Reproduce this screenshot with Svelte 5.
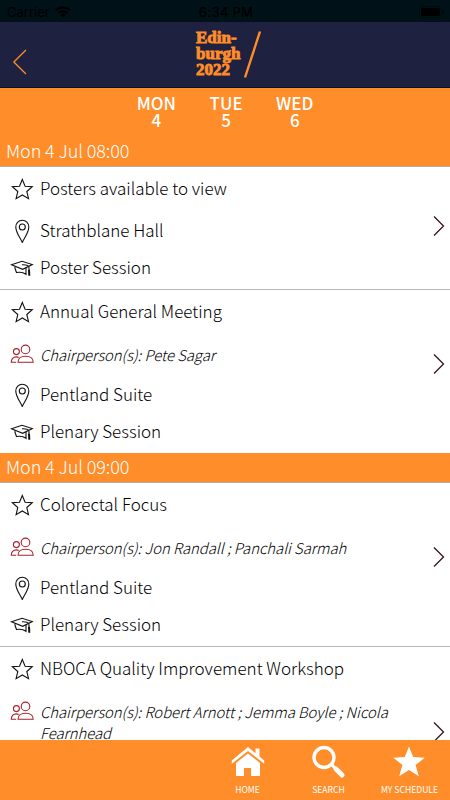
<script lang="ts">
	type Session = {
		title: string;
		chairs?: string;
		location: string;
		type: string;
	};

	type Slot = {
		time: string;
		sessions: Session[];
	};

	const days = [
		{ name: 'MON', date: 4 },
		{ name: 'TUE', date: 5 },
		{ name: 'WED', date: 6 }
	];

	const slots: Slot[] = [
		{
			time: 'Mon 4 Jul 08:00',
			sessions: [
				{ title: 'Posters available to view', location: 'Strathblane Hall', type: 'Poster Session' },
				{
					title: 'Annual General Meeting',
					chairs: 'Pete Sagar',
					location: 'Pentland Suite',
					type: 'Plenary Session'
				}
			]
		},
		{
			time: 'Mon 4 Jul 09:00',
			sessions: [
				{
					title: 'Colorectal Focus',
					chairs: 'Jon Randall ; Panchali Sarmah',
					location: 'Pentland Suite',
					type: 'Plenary Session'
				},
				{
					title: 'NBOCA Quality Improvement Workshop',
					chairs: 'Robert Arnott ; Jemma Boyle ; Nicola Fearnhead',
					location: 'Pentland Suite',
					type: 'Plenary Session'
				}
			]
		}
	];
</script>

{#snippet star()}
	<svg class="icon" width="24" height="24" viewBox="0 0 24 24">
		<path d="M12.300 2.500l2.800 6.700 7.200.5-5.500 4.800 1.700 7.200-6.200-3.700-6.200 3.700 1.700-7.200-5.500-4.800 7.200-.5z" />
	</svg>
{/snippet}

{#snippet people()}
	<svg class="icon red" width="24" height="24" viewBox="0 0 24 24">
		<circle cx="15.500" cy="7.400" r="4.300" />
		<circle cx="6.400" cy="9.600" r="3" />
		<path d="M8 20.200c0-4 3.200-6 7.600-6s7.600 2 7.600 6z" />
		<path d="M6.200 20.200H1.300c0-3.200 1.800-5.300 5-5.300 1 0 1.800.2 2.400.5" />
	</svg>
{/snippet}

{#snippet pin()}
	<svg class="icon" width="24" height="24" viewBox="0 0 24 24">
		<path d="M12.300 23.500C9.800 18 5.800 13.500 5.800 8a6.500 6.800 0 0 1 13 0c0 5.500-4 10-6.500 15.500z" />
		<circle cx="12.300" cy="8" r="3" />
	</svg>
{/snippet}

{#snippet cap()}
	<svg class="icon cap" width="24" height="24" viewBox="0 0 24 24">
		<path d="M1.500 8.800L12 5.300l10.300 3.200-9.600 4.800z" />
		<path d="M5 10.500v1.800l1.500 4.200c4-.8 6.800-.2 9.500 1.800v-6.500" />
		<path d="M12 8.800c4-.3 7 .8 7 3v2.500" />
		<path class="tassel" d="M19 13.800l.3 6" />
	</svg>
{/snippet}

<div class="app">
	<div class="status">
		<div class="carrier">
			<span>Carrier</span>
			<svg width="16" height="12" viewBox="0 0 16 12">
				<path d="M1 4.400a10 10 0 0 1 14 0M3.500 7a6.500 6.500 0 0 1 9 0" />
				<path class="dot" d="M5.400 8.900a3.700 3.700 0 0 1 5.200 0L8 11.600z" />
			</svg>
		</div>
		<span class="clock">6:34 PM</span>
		<svg class="battery" width="26" height="12" viewBox="0 0 26 12">
			<rect class="shell" x=".5" y=".5" width="22" height="11" rx="3" />
			<rect x="2" y="2" width="19" height="8" rx="1.500" />
			<path d="M24 4v4c1.500-.8 1.500-3.200 0-4z" />
		</svg>
	</div>

	<header>
		<button class="back" aria-label="Back">
			<svg width="16" height="28" viewBox="0 0 16 28"><path d="M14 2L1.800 14 14 26" /></svg>
		</button>
		<div class="logo">
			<div class="wordmark">
				<span>Edin-</span>
				<span>burgh</span>
				<span>2022</span>
			</div>
			<svg width="20" height="50" viewBox="0 0 20 50"><path d="M17 1.500L2 47.500" /></svg>
		</div>
	</header>

	<nav class="days">
		{#each days as d (d.date)}
			<button><span>{d.name}</span><span>{d.date}</span></button>
		{/each}
	</nav>

	<main>
		{#each slots as slot (slot.time)}
			<h2>{slot.time}</h2>
			{#each slot.sessions as s (s.title)}
				<article>
					<div class="info">
						<div class="row title">{@render star()}<span>{s.title}</span></div>
						{#if s.chairs}
							<div class="row chairs">{@render people()}<em>Chairperson(s): {s.chairs}</em></div>
						{/if}
						<div class="row">{@render pin()}<span>{s.location}</span></div>
						<div class="row">{@render cap()}<span>{s.type}</span></div>
					</div>
					<svg class="chevron" class:lifted={s.chairs} width="14" height="22" viewBox="0 0 14 22">
						<path d="M2 1.500L11.500 11 2 20.500" />
					</svg>
				</article>
			{/each}
		{/each}
	</main>

	<footer>
		<button>
			<svg width="34" height="32" viewBox="0 0 34 32">
				<path d="M17 1L.8 14.500v3.300L17 5l16.200 12.800v-3.300l-4.700-4V2.500h-4v4.700z" />
				<path d="M17 7.500L5 17v13h8v-8h7v8h9V17z" />
			</svg>
			<span>HOME</span>
		</button>
		<button>
			<svg width="34" height="34" viewBox="0 0 34 34">
				<circle class="lens" cx="12" cy="12.500" r="10" />
				<path class="handle" d="M19.500 19.500l3.500 3.500" />
				<path class="grip" d="M24 24l6 6" />
			</svg>
			<span>SEARCH</span>
		</button>
		<button>
			<svg width="34" height="32" viewBox="0 0 34 32">
				<path d="M16 .5l4.200 10.600 11.600.7-9.200 7.200 3.200 11.300L16 24.100l-9.800 6.200 3.200-11.300L.2 11.800l11.600-.7z" />
			</svg>
			<span>MY SCHEDULE</span>
		</button>
	</footer>
</div>

<style>
	:global(body) { margin: 0; background: #fff; }

	.app {
		display: flex;
		flex-direction: column;
		width: 450px;
		height: 800px;
		overflow: hidden;
		background: #fff;
		color: #000;
		font-family: 'Noto Sans CJK SC', 'Noto Sans', sans-serif;
	}

	button {
		padding: 0;
		border: 0;
		background: none;
		color: #fff;
		font: inherit;
	}

	svg { display: block; flex: none; }

	.status {
		display: grid;
		grid-template-columns: 1fr auto 1fr;
		align-items: center;
		box-sizing: border-box;
		height: 22px;
		padding: 1px 5px 0 7px;
		background: #001217;
		color: #000;
		font: 13px Inter, 'Liberation Sans', sans-serif;
	}
	.carrier { display: flex; gap: 5px; align-items: center; }
	.carrier path { fill: none; stroke: #000; stroke-width: 2; }
	.carrier .dot { fill: #000; stroke: none; }
	.clock { font-weight: 500; letter-spacing: 0.3px; }
	.battery { justify-self: end; }
	.battery .shell { fill: none; stroke: #000b0e; }

	header {
		display: grid;
		grid-template-columns: 1fr auto 1fr;
		box-sizing: border-box;
		height: 66px;
		background: #1e213f;
		border-bottom: 1px solid #100f2b;
	}
	.back { align-self: start; justify-self: start; margin: 26px 0 0 12px; }
	.back path { fill: none; stroke: #ff8d29; stroke-width: 1.3; }
	.logo { display: flex; gap: 2px; padding: 8px 0 0 9px; }
	.logo path { stroke: #ff8d29; stroke-width: 2.4; }
	.wordmark {
		display: flex;
		flex-direction: column;
		width: 45px;
		color: #ff8d29;
		font: bold 17px/16px 'Liberation Serif', serif;
		-webkit-text-stroke: 0.9px #ff8d29;
	}

	.days {
		display: flex;
		flex: none;
		justify-content: center;
		gap: 33.5px;
		box-sizing: border-box;
		height: 49px;
		padding-top: 6px;
		background: #ff8d29;
	}
	.days button {
		display: flex;
		flex-direction: column;
		align-items: center;
		font-size: 17px;
		font-weight: 500;
		line-height: 17px;
	}

	main { flex: 1; min-height: 0; overflow: hidden; }

	h2 {
		box-sizing: border-box;
		height: 30px;
		margin: 0;
		padding-left: 6px;
		background: #ff8d29;
		border-bottom: 1px solid #b5aea0;
		color: #fff;
		font-size: 18px;
		font-weight: 300;
		line-height: 26px;
		letter-spacing: -0.1px;
	}

	article { display: flex; align-items: center; padding-bottom: 3px; }
	article + article { border-top: 1px solid #b8b8b8; }
	.info { flex: 1; }
	.row {
		display: flex;
		align-items: center;
		gap: 6px;
		height: 37px;
		padding-left: 10px;
		font-size: 17px;
		font-weight: 300;
		line-height: 21px;
	}
	.row span { padding-bottom: 2px; }
	.title { height: 43px; padding-bottom: 2px; }
	.chairs { align-items: flex-start; box-sizing: border-box; height: auto; padding: 9px 0 11px 10px; }
	.chairs em { max-width: 365px; font-size: 14.9px; letter-spacing: -0.05px; }
	.chairs .icon { margin: -2px 0; }

	.icon { fill: none; stroke: #111; stroke-width: 1.1; }
	.icon.red { stroke: #a8202b; }
	.tassel { stroke-width: 2; }

	.chevron { margin: 0 4px 1px 0; fill: none; stroke: #351619; stroke-width: 1.3; }
	.chevron.lifted { margin-bottom: 12px; }

	footer {
		display: flex;
		flex: none;
		justify-content: flex-end;
		box-sizing: border-box;
		height: 60px;
		padding-top: 5px;
		background: #ff8d29;
	}
	footer button {
		display: flex;
		flex-direction: column;
		align-items: center;
		width: 81px;
	}
	footer svg { height: 34px; fill: #fff; }
	footer span { margin-top: 3px; font-size: 8.6px; line-height: 14px; white-space: nowrap; }
	.lens { fill: none; stroke: #fff; stroke-width: 3.4; }
	.handle { stroke: #fff; stroke-width: 3; }
	.grip { stroke: #fff; stroke-width: 5; stroke-linecap: round; }
</style>
